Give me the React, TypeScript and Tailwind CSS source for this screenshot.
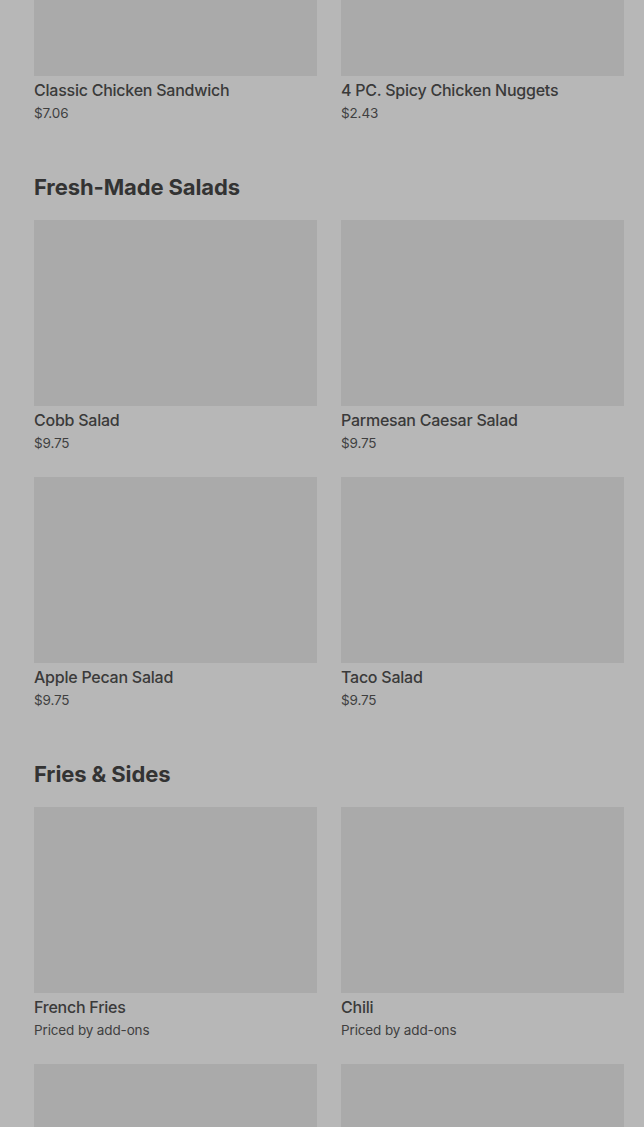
import React from 'react';

type Item = { name: string; price: string };

const SECTIONS: { title?: string; items: Item[] }[] = [
  {
    items: [
      { name: 'Classic Chicken Sandwich', price: '$7.06' },
      { name: '4 PC. Spicy Chicken Nuggets', price: '$2.43' },
    ],
  },
  {
    title: 'Fresh-Made Salads',
    items: [
      { name: 'Cobb Salad', price: '$9.75' },
      { name: 'Parmesan Caesar Salad', price: '$9.75' },
      { name: 'Apple Pecan Salad', price: '$9.75' },
      { name: 'Taco Salad', price: '$9.75' },
    ],
  },
  {
    title: 'Fries & Sides',
    items: [
      { name: 'French Fries', price: 'Priced by add-ons' },
      { name: 'Chili', price: 'Priced by add-ons' },
      { name: 'Baked Potato', price: 'Priced by add-ons' },
      { name: 'Apple Bites', price: 'Priced by add-ons' },
    ],
  },
];

function MenuCard({ item }: { item: Item }) {
  return (
    <div className="flex flex-col pb-[1px]">
      <div className="h-[186px] w-full bg-[#aaaaaa]" />
      <div className="mt-[4px] text-[16px] leading-[20px] font-medium tracking-[-0.015em] text-[#3a3a3a] [font-family:Inter,'Liberation_Sans',sans-serif]">
        {item.name}
      </div>
      <div className="mt-[4px] text-[13.5px] leading-[18px] text-[#3f3f3f] tracking-[-0.01em] [font-family:Inter,'Liberation_Sans',sans-serif]">
        {item.price}
      </div>
    </div>
  );
}

export default function App() {
  return (
    <div className="h-[1127px] w-full overflow-hidden bg-[#b7b7b7]">
      <div className="-mt-[110px] pl-[34px] pr-[20px] flex flex-col gap-[50px]">
        {SECTIONS.map((s, i) => (
          <section key={i} className="flex flex-col">
            {s.title && (
              <h2 className="h-[28px] mb-[19px] text-[22px] leading-[28px] font-bold tracking-[-0.005em] text-[#333333] [font-family:Inter,'Liberation_Sans',sans-serif]">
                {s.title}
              </h2>
            )}
            <div className="grid grid-cols-2 gap-x-6 gap-y-6">
              {s.items.map((it) => (
                <MenuCard key={it.name} item={it} />
              ))}
            </div>
          </section>
        ))}
      </div>
    </div>
  );
}
